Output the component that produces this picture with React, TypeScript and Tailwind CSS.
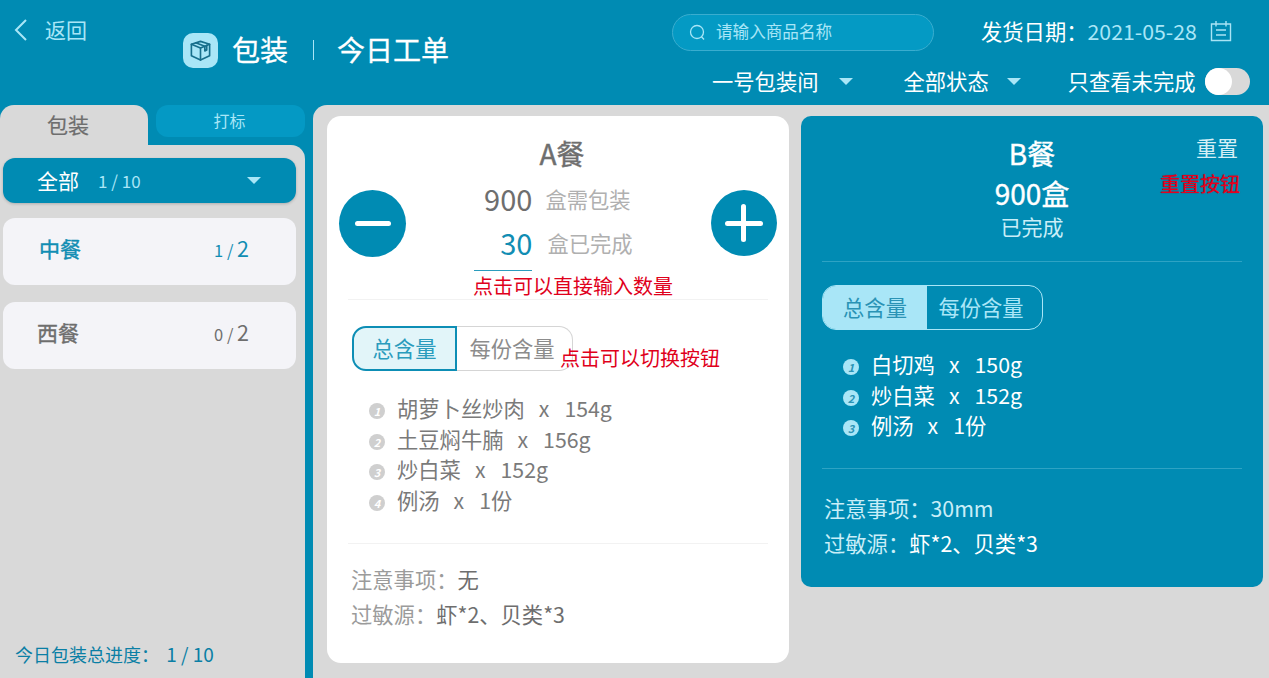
import { useState } from 'react';

const FONT = "font-['Noto_Sans_CJK_SC','Noto_Sans',sans-serif]";

function Triangle({ className }: { className: string }) {
    return <span className={`inline-block w-0 h-0 border-l-[7.5px] border-r-[7.5px] border-t-[7px] border-l-transparent border-r-transparent ${className}`}></span>;
}

function BoxIcon() {
    return (
        <svg width="23" height="23" viewBox="0 0 24 24" fill="none" stroke="#176f8c" strokeWidth="1.7" strokeLinejoin="round" strokeLinecap="round">
            <path d="M12 2.5 L21.5 5.5 V17.5 L12 22 L2.5 17.5 V5.5 Z" />
            <path d="M2.5 5.5 L12 9.5 L21.5 5.5" />
            <path d="M12 9.5 V22" />
            <path d="M7 4 L16.5 7.6 V12.5 L18.5 11.5 V6.5" />
        </svg>
    );
}

function CalendarIcon() {
    return (
        <svg width="22" height="22" viewBox="0 0 22 22" fill="none" stroke="#a9e4f5" strokeWidth="1.4">
            <path d="M1.5 4 H20.5 V20.5 H1.5 Z" />
            <path d="M6 1 V6.5 M16 1 V6.5" />
            <path d="M6 10 H16 M6 15 H16" />
        </svg>
    );
}

function Bullet({ n, dark }: { n: number; dark?: boolean }) {
    return (
        <span className={`w-[16px] h-[16px] rounded-full flex items-center justify-center text-[11px] italic font-bold shrink-0 ${dark ? 'bg-[#a9e6f7] text-[#2a93b5]' : 'bg-[#cfcfcf] text-white'}`}>
            {n}
        </span>
    );
}

function Ingredients({ items, dark }: { items: [string, string][]; dark?: boolean }) {
    return (
        <ul className={`flex flex-col text-[21.3px] leading-[30.5px] ${dark ? 'text-white' : 'text-[#7a7a7a]'}`}>
            {items.map(([name, qty], i) => (
                <li key={name} className="flex items-center">
                    <span className="mt-[6px] mr-[12px]"><Bullet n={i + 1} dark={dark} /></span>
                    <span>{name}</span>
                    <span className="ml-[14px]">x</span>
                    <span className="ml-[15px]">{qty}</span>
                </li>
            ))}
        </ul>
    );
}

function Segment({ dark }: { dark?: boolean }) {
    if (dark) {
        return (
            <div className="flex w-[221px] h-[45px] rounded-[14px] border border-[#a9e6f7] overflow-hidden text-[21.3px]">
                <div className="w-[104px] bg-[#a9e6f7] text-[#2a93b5] flex items-center justify-center pb-[2px]">总含量</div>
                <div className="flex-1 text-[#a9e6f7] flex items-center justify-center pr-[7px] pb-[2px]">每份含量</div>
            </div>
        );
    }
    return (
        <div className="flex w-[221px] h-[45px] text-[21.3px]">
            <div className="w-[105px] rounded-l-[14px] border-2 border-[#0d8eb5] bg-[#e2f5f9] text-[#2a9cbd] flex items-center justify-center pb-[2px]">总含量</div>
            <div className="flex-1 rounded-r-[14px] border border-l-0 border-[#d5d5d5] text-[#8c8c8c] flex items-center justify-center pr-[5px] pb-[2px]">每份含量</div>
        </div>
    );
}

export default function App() {
    const [onlyOpen] = useState(false);

    return (
        <div className={`${FONT} w-[1269px] h-[678px] overflow-hidden bg-[#008bb3] flex flex-col`}>
            {/* top bar */}
            <header className="h-[105px] flex shrink-0">
                <div className="w-[672px] shrink-0 flex flex-col">
                    <div className="flex items-center gap-[17px] pl-[13px] pt-[14px] h-[46px] text-[#a9e6f7] text-[21px]">
                        <svg width="15" height="22" viewBox="0 0 15 22" fill="none" stroke="#a9e6f7" strokeWidth="2"><path d="M13 1 L3 11 L13 21" /></svg>
                        <span>返回</span>
                    </div>
                    <div className="flex items-center pl-[183px] mt-[-18px]">
                        <span className="w-[35px] h-[35px] rounded-[10px] bg-[#a9e6f7] flex items-center justify-center"><BoxIcon /></span>
                        <span className="ml-[14px] mb-[2px] text-[28px] text-white [-webkit-text-stroke:0.3px_white]">包装</span>
                        <span className="w-px h-[20px] bg-[#a9e6f7] ml-[25px]"></span>
                        <span className="ml-[23px] mb-[2px] text-[28px] text-white [-webkit-text-stroke:0.3px_white]">今日工单</span>
                    </div>
                </div>
                <div className="flex-1 flex flex-col pt-[14px]">
                    <div className="flex items-center h-[37px]">
                        <div className="w-[262px] h-[37px] rounded-full bg-[#049ac4] border border-[#3aadcf] flex items-center pl-[16px] text-[#a9e6f7] text-[16.6px]">
                            <svg width="17" height="17" viewBox="0 0 17 17" fill="none" stroke="#a9e6f7" strokeWidth="1.3"><circle cx="8" cy="8" r="6.5" /><path d="M12.5 12.8 L15 15.5" /></svg>
                            <span className="ml-[10px] mb-[2px]">请输入商品名称</span>
                        </div>
                        <span className="ml-[47px] mb-[3px] text-[21.3px] text-white">发货日期：</span>
                        <span className="mb-[3px] text-[21.3px] text-[#a9e6f7]">2021-05-28</span>
                        <span className="ml-[13px] mb-[3px]"><CalendarIcon /></span>
                    </div>
                    <div className="flex items-center mt-[12px] h-[36px] text-[21.3px] text-white">
                        <span className="ml-[40px]">一号包装间</span>
                        <span className="ml-[20px] flex"><Triangle className="border-t-[#a9e6f7]" /></span>
                        <span className="ml-[51px]">全部状态</span>
                        <span className="ml-[18px] flex"><Triangle className="border-t-[#a9e6f7]" /></span>
                        <span className="ml-[47px]">只查看未完成</span>
                        <span className={`ml-[9px] w-[45px] h-[27px] rounded-full bg-[#d9d9d9] flex items-center ${onlyOpen ? 'justify-end' : ''}`}>
                            <span className="w-[27px] h-[27px] rounded-full bg-white"></span>
                        </span>
                    </div>
                </div>
            </header>

            <div className="flex-1 flex min-h-0">
                {/* sidebar */}
                <aside className="w-[305px] shrink-0 flex flex-col">
                    <div className="flex h-[40px] shrink-0">
                        <div className="w-[148px] pr-[12px] rounded-t-[14px] bg-[#d9d9d9] text-[#6e6e6e] text-[21px] [-webkit-text-stroke:0.2px_#6e6e6e] flex items-center justify-center">包装</div>
                        <div className="ml-[8px] flex-1 h-[32px] pb-[3px] pr-[2px] rounded-[12px] bg-[#0499c4] text-[#a9e6f7] text-[16px] flex items-center justify-center">打标</div>
                    </div>
                    <div className="flex-1 bg-[#d9d9d9] rounded-tr-[14px] flex flex-col pl-[3px] pr-[9px] pt-[13px]">
                        <div className="h-[45px] rounded-[12px] bg-[#008bb3] shadow-[0_1px_3px_rgba(0,0,0,0.2)] flex items-center pl-[34px] pr-[35px]">
                            <span className="text-white text-[21px]">全部</span>
                            <span className="ml-[19px] text-[#a9e6f7] text-[17px]">1 / 10</span>
                            <span className="ml-auto flex"><Triangle className="border-t-[#a9e6f7]" /></span>
                        </div>
                        <div className="mt-[15px] h-[67px] pb-[6px] rounded-[12px] bg-[#f4f4f8] flex items-center justify-between pl-[36px] pr-[47px]">
                            <span className="text-[21px] text-[#118db3] [-webkit-text-stroke:0.4px_#118db3]">中餐</span>
                            <span className="text-[#118db3] text-[16.5px]">1 / <span className="text-[21.5px]">2</span></span>
                        </div>
                        <div className="mt-[17px] h-[67px] pb-[6px] rounded-[12px] bg-[#f4f4f8] flex items-center justify-between pl-[34px] pr-[47px]">
                            <span className="text-[21px] text-[#6e6e6e] [-webkit-text-stroke:0.4px_#6e6e6e]">西餐</span>
                            <span className="text-[#6e6e6e] text-[16.5px]">0 / <span className="text-[21.5px]">2</span></span>
                        </div>
                        <div className="mt-auto mb-[10px] pl-[12px] text-[18px] text-[#0a7fa5] whitespace-pre">今日包装总进度：<span className="ml-[3px] text-[19px]"> 1 / 10</span></div>
                    </div>
                </aside>

                {/* main area */}
                <main className="ml-[8px] flex-1 bg-[#d9d9d9] rounded-tl-[14px] flex items-start gap-[12px] pl-[14px] pt-[11px]">
                    {/* card A */}
                    <section className="relative w-[462px] h-[547px] rounded-[14px] bg-white px-[21px]">
                        <h2 className="mt-[16px] pl-[8px] text-center text-[28px] leading-[42px] text-[#6e6e6e] [-webkit-text-stroke:0.4px_#6e6e6e]">A餐</h2>
                        <div className="flex items-center justify-between -mx-[9px] -mt-[6px] h-[110px]">
                            <button className="w-[67px] h-[67px] rounded-full bg-[#008bb3] flex items-center justify-center">
                                <span className="w-[36px] h-[5px] rounded-full bg-white"></span>
                            </button>
                            <div className="flex flex-col mb-[4px] mr-[17px] text-[#b0b0b0] text-[21.3px]">
                                <div className="flex items-center h-[44px]">
                                    <span className="w-[65px] text-right text-[29px] text-[#6e6e6e]">900</span>
                                    <span className="ml-[13px]">盒需包装</span>
                                </div>
                                <div className="flex items-center h-[44px]">
                                    <span className="w-[65px] text-right text-[29px] text-[#118db3]">30</span>
                                    <span className="ml-[15px]">盒已完成</span>
                                </div>
                            </div>
                            <button className="relative w-[66px] h-[66px] rounded-full bg-[#008bb3] flex items-center justify-center">
                                <span className="w-[38px] h-[5px] rounded-full bg-white"></span>
                                <span className="absolute w-[5px] h-[38px] rounded-full bg-white"></span>
                            </button>
                        </div>
                        <span className="absolute left-[147px] top-[154px] w-[58px] h-px bg-[#2a9cbd]"></span>
                        <span className="absolute left-[146px] top-[156px] text-[20px] leading-[28px] text-[#e0001b] whitespace-nowrap">点击可以直接输入数量</span>
                        <div className="mt-[21px] h-px bg-[#f2f2f2]"></div>
                        <div className="mt-[26px] pl-[4px]"><Segment /></div>
                        <span className="absolute left-[233px] top-[228px] text-[20px] leading-[28px] text-[#e0001b] whitespace-nowrap">点击可以切换按钮</span>
                        <div className="mt-[22px] pl-[21px]">
                            <Ingredients items={[['胡萝卜丝炒肉', '154g'], ['土豆焖牛腩', '156g'], ['炒白菜', '152g'], ['例汤', '1份']]} />
                        </div>
                        <div className="mt-[28px] h-px bg-[#f2f2f2]"></div>
                        <div className="mt-[17px] pl-[3px] text-[21.3px] leading-[35px] text-[#9b9b9b]">
                            <p>注意事项：<span className="text-[#6e6e6e]">无</span></p>
                            <p>过敏源：<span className="text-[#6e6e6e]">虾*2、贝类*3</span></p>
                        </div>
                    </section>

                    {/* card B */}
                    <section className="relative w-[462px] h-[471px] rounded-[10px] bg-[#008bb3] px-[21px]">
                        <div className="pt-[16px] flex flex-col items-center text-white">
                            <h2 className="text-[28px] leading-[42px] [-webkit-text-stroke:0.4px_white]">B餐</h2>
                            <p className="text-[28px] leading-[38px] [-webkit-text-stroke:0.4px_white]">900盒</p>
                            <p className="text-[21px] leading-[28px] text-[#c9eef8]">已完成</p>
                        </div>
                        <button className="absolute right-[25px] top-[16px] text-[21px] leading-[30px] text-[#d5eff6]">重置</button>
                        <span className="absolute right-[23px] top-[54px] text-[20px] leading-[28px] text-[#e6001f] [text-shadow:0_0_1px_#8a0012] whitespace-nowrap">重置按钮</span>
                        <div className="mt-[21px] h-px bg-[#2ea3c4]"></div>
                        <div className="mt-[23px]"><Segment dark /></div>
                        <div className="mt-[19px] pl-[21px]">
                            <Ingredients dark items={[['白切鸡', '150g'], ['炒白菜', '152g'], ['例汤', '1份']]} />
                        </div>
                        <div className="mt-[27px] h-px bg-[#2ea3c4]"></div>
                        <div className="mt-[21px] pl-[2px] text-[21.3px] leading-[35px] text-[#c9eef8]">
                            <p>注意事项：<span>30mm</span></p>
                            <p>过敏源：<span className="text-white">虾*2、贝类*3</span></p>
                        </div>
                    </section>
                </main>
            </div>
        </div>
    );
}
